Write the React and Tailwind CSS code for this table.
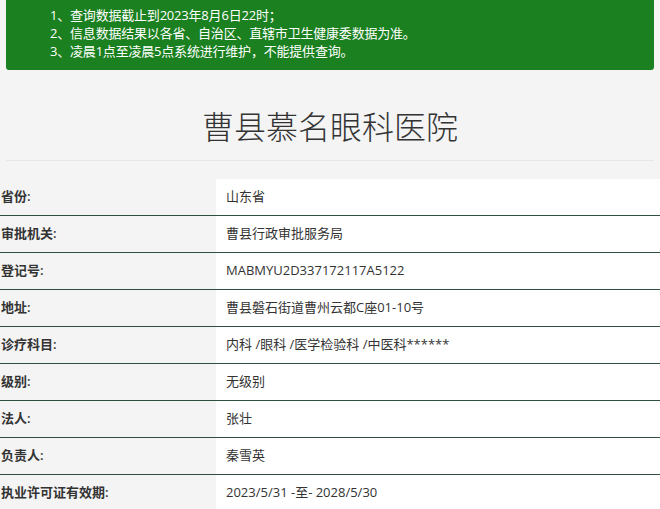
import React from "react";

const rows = [
  ["省份:", "山东省"],
  ["审批机关:", "曹县行政审批服务局"],
  ["登记号:", "MABMYU2D337172117A5122"],
  ["地址:", "曹县磐石街道曹州云都C座01-10号"],
  ["诊疗科目:", "内科 /眼科 /医学检验科 /中医科******"],
  ["级别:", "无级别"],
  ["法人:", "张壮"],
  ["负责人:", "秦雪英"],
  ["执业许可证有效期:", "2023/5/31 -至- 2028/5/30"],
];

const App = () => {
  return (
    <div
      className="min-h-screen bg-[#f4f4f4] overflow-hidden"
      style={{ fontFamily: '"Open Sans", "Noto Sans CJK SC", sans-serif' }}
    >
      {/* notice banner */}
      <div className="mx-[6px] bg-[#1b801f] rounded-b-[3px] pl-[44px] pt-[6px] pb-[10px] text-white text-[13px] leading-[18px] tracking-[-0.2px]">
        <p>1、查询数据截止到2023年8月6日22时；</p>
        <p>2、信息数据结果以各省、自治区、直辖市卫生健康委数据为准。</p>
        <p>3、凌晨1点至凌晨5点系统进行维护，不能提供查询。</p>
      </div>

      <h1 className="mt-[33px] text-center text-[32px] leading-[48px] font-light text-[#333]">
        曹县慕名眼科医院
      </h1>
      <div className="mt-[9px] mx-[6px] border-t border-[#e6e6e6]"></div>

      <div className="mt-[18px]">
        {rows.map(([label, value]) => (
          <div key={label} className="flex h-[37px] border-b border-[#2f4f3f]">
            <div className="w-[216px] shrink-0 flex items-center pl-[1px] text-[13px] font-semibold text-[#333]">
              {label}
            </div>
            <div className="flex-1 bg-white flex items-center pl-[10px] text-[13px] text-[#333]">
              {value}
            </div>
          </div>
        ))}
      </div>
    </div>
  );
};

export default App;
